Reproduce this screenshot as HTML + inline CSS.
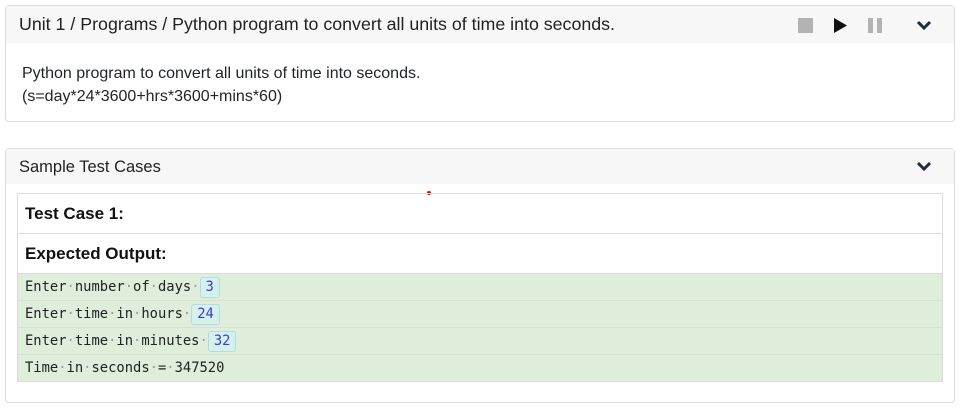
<!DOCTYPE html>
<html><head><style>
body{margin:0;background:#fff;font-family:"Liberation Sans",Arial,sans-serif;color:#212529;}
.card{position:absolute;left:5px;width:948px;border:1px solid #dcdcdc;border-radius:4px;background:#fff;}
.hdr{background:#f7f7f7;height:37px;line-height:37px;padding-left:13px;font-size:17px;color:#222;position:relative}
.chev{position:absolute;right:22px;top:13px}
.body1{padding:19px 0 0 16px;font-size:16px;line-height:23px;}
.tbl{position:absolute;left:11px;top:44px;width:924px;border:1px solid #dcdcdc;}
.row{border-bottom:1px solid #dcdcdc;height:39px;line-height:40px;padding-left:7px;font-weight:bold;font-size:17px;color:#111}
.out{background:#dfeedb;height:26px;line-height:26px;border-bottom:1px solid #d5e2d2;padding-left:7px;font-family:"DejaVu Sans Mono",monospace;font-size:13.8px;color:#222}
.d{color:#999}
.in{display:inline-block;background:#d6f1ec;border:1px solid #b2dbe4;border-radius:3px;color:#3b3bd6;padding:0 5px;line-height:19px;}
</style></head><body>
<div class="card" style="top:5px;height:115px">
 <div class="hdr" style="font-size:17.8px">Unit 1 / Programs / Python program to convert all units of time into seconds.
  <div style="position:absolute;left:792px;top:12px;width:15px;height:15px;background:#b3b3b3"></div>
  <svg style="position:absolute;left:827px;top:12px" width="15" height="15"><path d="M1 0L14 7.5L1 15Z" fill="#111"/></svg>
  <div style="position:absolute;left:862px;top:12px;width:5px;height:15px;background:#b3b3b3"></div>
  <div style="position:absolute;left:871px;top:12px;width:5px;height:15px;background:#b3b3b3"></div>
  <svg class="chev" width="16" height="12"><path d="M2 3L8 9L14 3" stroke="#1f2d3d" stroke-width="3" fill="none"/></svg>
 </div>
 <div class="body1">Python program to convert all units of time into seconds.<br>(s=day*24*3600+hrs*3600+mins*60)</div>
</div>
<div class="card" style="top:148px;height:253px">
 <div class="hdr" style="height:35px;line-height:36px;font-size:16.5px">Sample Test Cases
  <svg class="chev" width="16" height="12" style="top:11px"><path d="M2 3L8 9L14 3" stroke="#1f2d3d" stroke-width="3" fill="none"/></svg></div>
 <div style="position:absolute;left:421px;top:42px;width:4px;height:4px;border-radius:2px;background:#e00"></div>
 <div class="tbl">
  <div class="row">Test Case 1:</div>
  <div class="row">Expected Output:</div>
  <div class="out">Enter<span class="d">·</span>number<span class="d">·</span>of<span class="d">·</span>days<span class="d">·</span><span class="in">3</span></div>
  <div class="out">Enter<span class="d">·</span>time<span class="d">·</span>in<span class="d">·</span>hours<span class="d">·</span><span class="in">24</span></div>
  <div class="out">Enter<span class="d">·</span>time<span class="d">·</span>in<span class="d">·</span>minutes<span class="d">·</span><span class="in">32</span></div>
  <div class="out" style="border-bottom:none">Time<span class="d">·</span>in<span class="d">·</span>seconds<span class="d">·</span>=<span class="d">·</span>347520</div>
 </div>
</div>
</body></html>
